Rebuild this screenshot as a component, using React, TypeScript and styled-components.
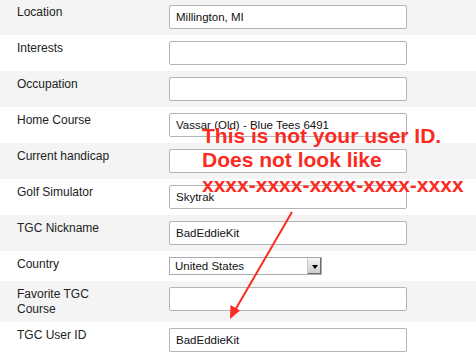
import React from "react";
import styled, { createGlobalStyle } from "styled-components";

const Global = createGlobalStyle`
  html, body { margin: 0; padding: 0; background: #fff; }
  body { font-family: "Liberation Sans", Arial, Helvetica, sans-serif; overflow: hidden; }
`;

const Page = styled.div`
  position: relative;
  width: 476px;
  margin-top: -1px;
`;

const Row = styled.div<{ $shade: boolean; $compact?: boolean }>`
  display: flex;
  align-items: flex-start;
  box-sizing: border-box;
  padding: 6px 0 5px;
  min-height: ${(p) => (p.$compact ? 30 : 36)}px;
  background: ${(p) => (p.$shade ? "#f4f4f4" : "#ffffff")};
`;

const Label = styled.div`
  width: 169px;
  flex-shrink: 0;
  box-sizing: border-box;
  padding-left: 17px;
  font-size: 12px;
  line-height: 15px;
  color: #222;
`;

const Field = styled.div`
  width: 238px;
  height: 24px;
  box-sizing: border-box;
  border: 1px solid #b2b3bb;
  border-radius: 2px;
  background: #fff;
  padding: 0 6px;
  display: flex;
  align-items: center;
  font-size: 11.5px;
  color: #111;
  white-space: nowrap;
  overflow: hidden;
`;

const Select = styled.div`
  width: 153px;
  height: 18px;
  box-sizing: border-box;
  border: 1px solid #a9aab2;
  background: #fff;
  display: flex;
  align-items: stretch;
  font-size: 11.5px;
  color: #111;
`;

const SelectText = styled.span`
  flex: 1;
  padding-left: 5px;
  display: flex;
  align-items: center;
`;

const SelectButton = styled.span`
  width: 14px;
  box-sizing: border-box;
  border-left: 1px solid #c8c8c8;
  background: linear-gradient(#f6f6f6, #c9c9c9);
  box-shadow: inset -1px -1px 0 #6e6e6e;
  display: flex;
  align-items: center;
  justify-content: center;
`;

const Triangle = styled.span`
  width: 0;
  height: 0;
  border-left: 3.5px solid transparent;
  border-right: 3.5px solid transparent;
  border-top: 4px solid #000;
  margin-top: 1px;
`;

const Note = styled.div`
  position: absolute;
  left: 202px;
  top: 125px;
  font-size: 21px;
  line-height: 24.3px;
  font-weight: bold;
  color: #fb2b1f;
  white-space: nowrap;
  pointer-events: none;
`;

const ArrowSvg = styled.svg`
  position: absolute;
  left: 0;
  top: 1px;
  pointer-events: none;
`;

type Item = { label: React.ReactNode; value?: string; kind?: "select"; compact?: boolean };

const items: Item[] = [
  { label: "Location", value: "Millington, MI" },
  { label: "Interests", value: "" },
  { label: "Occupation", value: "" },
  { label: "Home Course", value: "Vassar (Old) - Blue Tees 6491" },
  { label: "Current handicap", value: "" },
  { label: "Golf Simulator", value: "Skytrak" },
  { label: "TGC Nickname", value: "BadEddieKit" },
  { label: "Country", value: "United States", kind: "select", compact: true },
  { label: <>Favorite TGC<br />Course</>, value: "" },
  { label: "TGC User ID", value: "BadEddieKit" },
];

export default function App() {
  return (
    <>
      <Global />
      <Page>
        {items.map((it, i) => (
          <Row key={i} $shade={i % 2 === 0} $compact={it.compact}>
            <Label>{it.label}</Label>
            {it.kind === "select" ? (
              <Select>
                <SelectText>{it.value}</SelectText>
                <SelectButton>
                  <Triangle />
                </SelectButton>
              </Select>
            ) : (
              <Field>{it.value}</Field>
            )}
          </Row>
        ))}
        <Note>
          This is not your user ID.
          <br />
          Does not look like
          <br />
          xxxx-xxxx-xxxx-xxxx-xxxx
        </Note>
        <ArrowSvg width="476" height="356" viewBox="0 0 476 356">
          <line x1="292" y1="212" x2="234" y2="312" stroke="#fb2b1f" strokeWidth="2" />
          <polygon points="230,319 230.5,305 240,310.5" fill="#fb2b1f" />
        </ArrowSvg>
      </Page>
    </>
  );
}
